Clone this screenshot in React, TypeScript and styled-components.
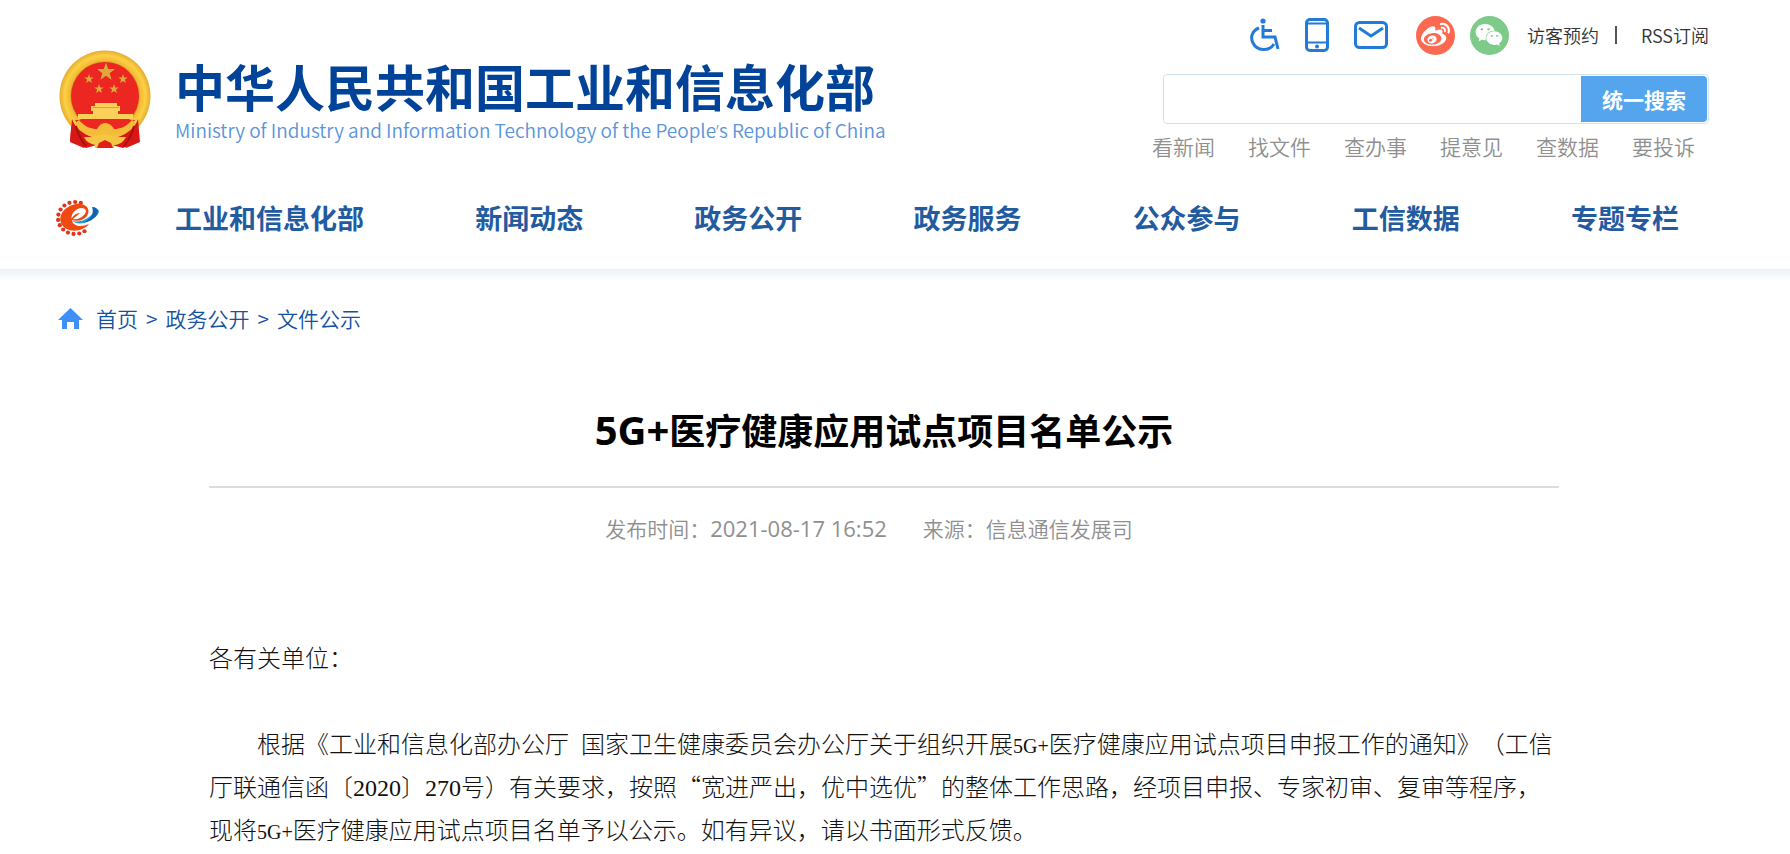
import React from 'react';
import styled, { createGlobalStyle } from 'styled-components';
import { FaWeibo, FaWeixin } from 'react-icons/fa';

const sans = `'Open Sans', 'Noto Sans CJK SC', sans-serif`;
const hans = `'Noto Sans CJK SC', sans-serif`;

const GlobalStyle = createGlobalStyle`
  * { box-sizing: border-box; }
  body { margin: 0; background: #fff; font-family: ${hans}; color: #333; text-spacing-trim: space-all; }
  a { color: inherit; text-decoration: none; }
  svg { display: block; }
`;

const Header = styled.header`
  height: 269px;
  padding: 0 81px 0 56px;
  background: #fff;
`;

const HeaderTop = styled.div`
  display: flex;
  justify-content: space-between;
  height: 184px;
`;

const Brand = styled.a`
  display: flex;
  align-items: flex-start;
  gap: 22px;
  padding: 50px 0 0 2px;
`;

const BrandText = styled.span`
  display: flex;
  flex-direction: column;
  white-space: nowrap;
`;

const BrandName = styled.span`
  font-size: 50px;
  line-height: 70px;
  height: 66px;
  font-weight: 700;
  color: #004398;
`;

const BrandSub = styled.span`
  font-size: 19px;
  line-height: 28px;
  font-weight: 350;
  color: #5a94da;
`;

const Apostrophe = styled.span`
  font-family: ${sans};
  line-height: 1;
`;

const Tools = styled.div`
  display: flex;
  flex-direction: column;
  align-items: flex-end;
`;

const Utility = styled.div`
  display: flex;
  align-items: center;
  height: 70px;
  font-size: 18px;
  font-weight: 350;
  color: #333;
`;

const IconLink = styled.a<{ $gap: number }>`
  margin-right: ${(p) => p.$gap}px;
`;

const Round = styled(IconLink)<{ $bg: string }>`
  display: flex;
  align-items: center;
  justify-content: center;
  width: 39px;
  height: 39px;
  border-radius: 50%;
  color: #fff;
  background: ${(p) => p.$bg};
`;

const Bar = styled.span`
  width: 2px;
  height: 18px;
  margin: 0 24px 0 16px;
  background: #555;
`;

const Search = styled.form`
  display: flex;
  width: 546px;
  height: 50px;
  margin-top: 4px;
  padding: 1px;
  border: 1px solid #d3e1ec;
  border-radius: 4px;
`;

const SearchInput = styled.input`
  flex: 1;
  min-width: 0;
  border: 0;
  outline: 0;
  padding: 0 12px;
  font: 20px ${hans};
`;

const SearchButton = styled.button`
  width: 126px;
  border: 0;
  border-radius: 0 4px 4px 0;
  background: #54a4ee;
  color: #fff;
  font: 700 21px ${hans};
`;

const QuickLinks = styled.div`
  display: flex;
  gap: 33px;
  margin-right: 14px;
  padding-top: 7px;
  font-size: 21px;
  line-height: 30px;
  font-weight: 350;
  color: #8f8f8f;
`;

const Nav = styled.nav`
  display: flex;
  align-items: center;
  height: 68px;
`;

const NavList = styled.div`
  flex: 1;
  display: flex;
  justify-content: space-between;
  margin: 0 30px 0 75px;
  font-size: 27px;
  line-height: 40px;
  font-weight: 700;
  color: #235ba1;
`;

const Main = styled.main`
  padding: 0 81px 0 58px;
  background: linear-gradient(#eaf1f7, #fff 12px);
`;

const Crumbs = styled.nav`
  display: flex;
  align-items: center;
  gap: 8px;
  padding-top: 33px;
  font-size: 21px;
  line-height: 32px;
  font-weight: 350;
  color: #1352a0;
`;

const HomeMark = styled.svg`
  margin-right: 5px;
`;

const Article = styled.article`
  padding: 0 150px 0 151px;
`;

const Title = styled.h1`
  margin: 0;
  padding: 68px 0 30px;
  border-bottom: 2px solid #dcdcdc;
  text-align: center;
  font-size: 36px;
  line-height: 54px;
  font-weight: 700;
  color: #000;
`;

const TitleLatin = styled.span`
  font-family: ${sans};
  font-size: 40px;
  line-height: 40px;
`;

const Meta = styled.div`
  display: flex;
  justify-content: center;
  gap: 36px;
  padding: 24px 30px 0 0;
  font-size: 21px;
  line-height: 32px;
  font-weight: 350;
  color: #8f8f8f;
`;

const Stamp = styled.time`
  font-family: ${sans};
  font-size: 22px;
  line-height: 1;
  font-weight: 400;
`;

const Body = styled.div`
  padding-top: 91px;
  font-size: 24px;
  line-height: 43px;
  font-weight: 300;
  color: #111;
`;

const Paragraph = styled.p<{ $indent?: boolean }>`
  margin: 0 0 43px;
  text-indent: ${(p) => (p.$indent ? '2em' : '0')};

  &:last-child {
    margin-bottom: 0;
  }
`;

const Num = styled.span`
  font-family: 'Liberation Serif', serif;
  line-height: 1;
`;

const Term = styled(Num)`
  font-size: 20px;
`;

const star = (cx: number, cy: number, r: number) =>
  Array.from({ length: 10 }, (_, i) => {
    const a = (Math.PI / 5) * i - Math.PI / 2;
    const d = i % 2 ? r * 0.4 : r;
    return `${(cx + d * Math.cos(a)).toFixed(1)},${(cy + d * Math.sin(a)).toFixed(1)}`;
  }).join(' ');

const Emblem = () => (
  <svg width="95" height="100" viewBox="0 0 95 100" aria-hidden="true">
    <defs>
      <radialGradient id="gold" cx="47" cy="46" r="46" gradientUnits="userSpaceOnUse">
        <stop offset="0.72" stopColor="#c98c1c" />
        <stop offset="0.77" stopColor="#f3bb35" />
        <stop offset="0.88" stopColor="#fcd045" />
        <stop offset="1" stopColor="#e3a82e" />
      </radialGradient>
    </defs>
    <path d="M14 68 12 91 28 98 46 93 65 98 81 91 79 68Z" fill="#dc1713" />
    <circle cx="47" cy="46" r="45.500" fill="url(#gold)" />
    <circle cx="47" cy="46" r="34" fill="#ec2722" />
    <g fill="#dfaa3c">
      <polygon points={star(48, 22, 9.5)} />
      <polygon points={star(31, 29, 5)} />
      <polygon points={star(65, 29, 5)} />
      <polygon points={star(41, 39, 5)} />
      <polygon points={star(56, 39, 5)} />
    </g>
    <path d="M37 53h22v3h3v5h-2v3h15v5H20v-5h15v-3h-2v-5h4Z" fill="#fbd05a" />
    <path d="M35 57.500h26" stroke="#dda232" strokeWidth="1" />
    <path d="M17 70h60c-5 9-14 14-22 15l-8-4-8 4C29 84 22 78 17 70Z" fill="#ec2722" />
    <path d="M21 70c6 7 12 9 18 9 2-4 5-6 8-6s7 2 9 6c6 0 12-2 18-9l4 3c-5 8-14 13-23 13l-8-2-8 2c-9 0-17-5-22-13Z" fill="#f3bd3a" />
    <path d="M14 69c3 9 11 15 20 18l-8 11-14-6Z M80 69c-3 9-11 15-20 18l8 11 14-6Z" fill="#d91815" />
    <path d="M18 76c2 9 6 15 10 20M76 76c-2 9-6 15-10 20" stroke="#a90f10" strokeWidth="2" fill="none" />
    <path d="M26 87c8 0 13 1 21-3 8 4 13 3 21 3-3 6-8 8-12 8v3H37v-3c-4-1-9-3-11-8Z" fill="#f5c544" />
    <path d="m39 98 2-5 6-3 6 3 2 5Z" fill="#e01f19" />
  </svg>
);

const teeth = Array.from({ length: 13 }, (_, i) => {
  const a = ((56 + i * 19.5) * Math.PI) / 180;
  return { x: 19 + 17 * Math.cos(a), y: 19 + 16 * Math.sin(a) };
});

const GearMark = () => (
  <svg width="44" height="38" viewBox="0 0 44 38" aria-hidden="true">
    {teeth.map((t, i) => (
      <circle key={i} cx={t.x} cy={t.y} r="2.1" fill="#e0331c" />
    ))}
    <path d="M31 17C36 9 28 4 20 5 9 7 2 16 5 24c4 10 21 10 28 1-7 3-15 3-17-3-2-7 3-12 9-13 6 0 6 4 3 7-3 3-7 5-11 4 2-2 5-4 7-6-5 0-8 4-9 7 7 2 13 0 16-4Z" fill="#ee4a12" />
    <path d="M16 22c9 2 18-2 24-12 5 0 3 6-2 9-8 6-16 7-22 3Z" fill="#1b9be0" />
    <path d="M36 8c8 0 7 7 2 11-3 3-7 4-11 5 6-3 12-8 9-16Z" fill="#1161ae" />
  </svg>
);

const navItems = ['工业和信息化部', '新闻动态', '政务公开', '政务服务', '公众参与', '工信数据', '专题专栏'];
const quickItems = ['看新闻', '找文件', '查办事', '提意见', '查数据', '要投诉'];

export default function App() {
  return (
    <>
      <GlobalStyle />
      <Header>
        <HeaderTop>
          <Brand href="#">
            <Emblem />
            <BrandText>
              <BrandName>中华人民共和国工业和信息化部</BrandName>
              <BrandSub>
                Ministry of Industry and Information Technology of the People<Apostrophe>’</Apostrophe>s Republic of China
              </BrandSub>
            </BrandText>
          </Brand>
          <Tools>
            <Utility>
              <IconLink href="#" $gap={25} aria-label="无障碍">
                <svg width="30" height="34" viewBox="0 0 30 34" fill="none" stroke="#227bd9" strokeWidth="3">
                  <circle cx="13" cy="3" r="2.6" fill="#227bd9" stroke="none" />
                  <path d="M13 7v12h12l3 12M14 12.500h8" />
                  <path d="M9 10C2 13 0 19 3 25c4 8 16 9 21 1" />
                </svg>
              </IconLink>
              <IconLink href="#" $gap={25} aria-label="手机版">
                <svg width="24" height="34" viewBox="0 0 24 34" fill="none" stroke="#227bd9" strokeWidth="3">
                  <rect x="1.5" y="1.5" width="21" height="31" rx="3.5" />
                  <path d="M2 5.5h20M2 24.5h20" strokeWidth="2" />
                  <circle cx="12" cy="28.6" r="2" fill="#227bd9" stroke="none" />
                </svg>
              </IconLink>
              <IconLink href="#" $gap={28} aria-label="邮箱">
                <svg width="34" height="28" viewBox="0 0 34 28" fill="none" stroke="#227bd9" strokeWidth="3">
                  <rect x="1.5" y="1.5" width="31" height="25" rx="4" />
                  <path d="m5 7 12 8 12-8" />
                </svg>
              </IconLink>
              <Round href="#" $gap={15} $bg="#fb6a50" aria-label="微博">
                <FaWeibo size={29} />
              </Round>
              <Round href="#" $gap={18} $bg="#7ecb89" aria-label="微信">
                <FaWeixin size={28} />
              </Round>
              <a href="#">访客预约</a>
              <Bar />
              <a href="#">RSS订阅</a>
            </Utility>
            <Search onSubmit={(e) => e.preventDefault()}>
              <SearchInput type="text" aria-label="搜索" />
              <SearchButton type="submit">统一搜索</SearchButton>
            </Search>
            <QuickLinks>
              {quickItems.map((t) => (
                <a key={t} href="#">{t}</a>
              ))}
            </QuickLinks>
          </Tools>
        </HeaderTop>
        <Nav>
          <GearMark />
          <NavList>
            {navItems.map((t) => (
              <a key={t} href="#">{t}</a>
            ))}
          </NavList>
        </Nav>
      </Header>
      <Main>
        <Crumbs>
          <HomeMark width="25" height="21" viewBox="0 0 25 21" aria-hidden="true">
            <path d="M12.500 0 25 12h-4v9h-5v-7H9v7H4v-9H0Z" fill="#3f8ff7" />
          </HomeMark>
          <a href="#">首页</a>
          <span>&gt;</span>
          <a href="#">政务公开</a>
          <span>&gt;</span>
          <a href="#">文件公示</a>
        </Crumbs>
        <Article>
          <Title>
            <TitleLatin>5G+</TitleLatin>医疗健康应用试点项目名单公示
          </Title>
          <Meta>
            <span>发布时间：<Stamp>2021-08-17 16:52</Stamp></span>
            <span>来源：信息通信发展司</span>
          </Meta>
          <Body lang="zh-CN">
            <Paragraph>各有关单位：</Paragraph>
            <Paragraph $indent>
              根据《工业和信息化部办公厅<Num>&nbsp; </Num>国家卫生健康委员会办公厅关于组织开展<Term>5G+</Term>医疗健康应用试点项目申报工作的通知》（工信厅联通信函〔<Num>2020</Num>〕<Num>270</Num>号）有关要求，按照“宽进严出，优中选优”的整体工作思路，经项目申报、专家初审、复审等程序，现将<Term>5G+</Term>医疗健康应用试点项目名单予以公示。如有异议，请以书面形式反馈。
            </Paragraph>
          </Body>
        </Article>
      </Main>
    </>
  );
}
